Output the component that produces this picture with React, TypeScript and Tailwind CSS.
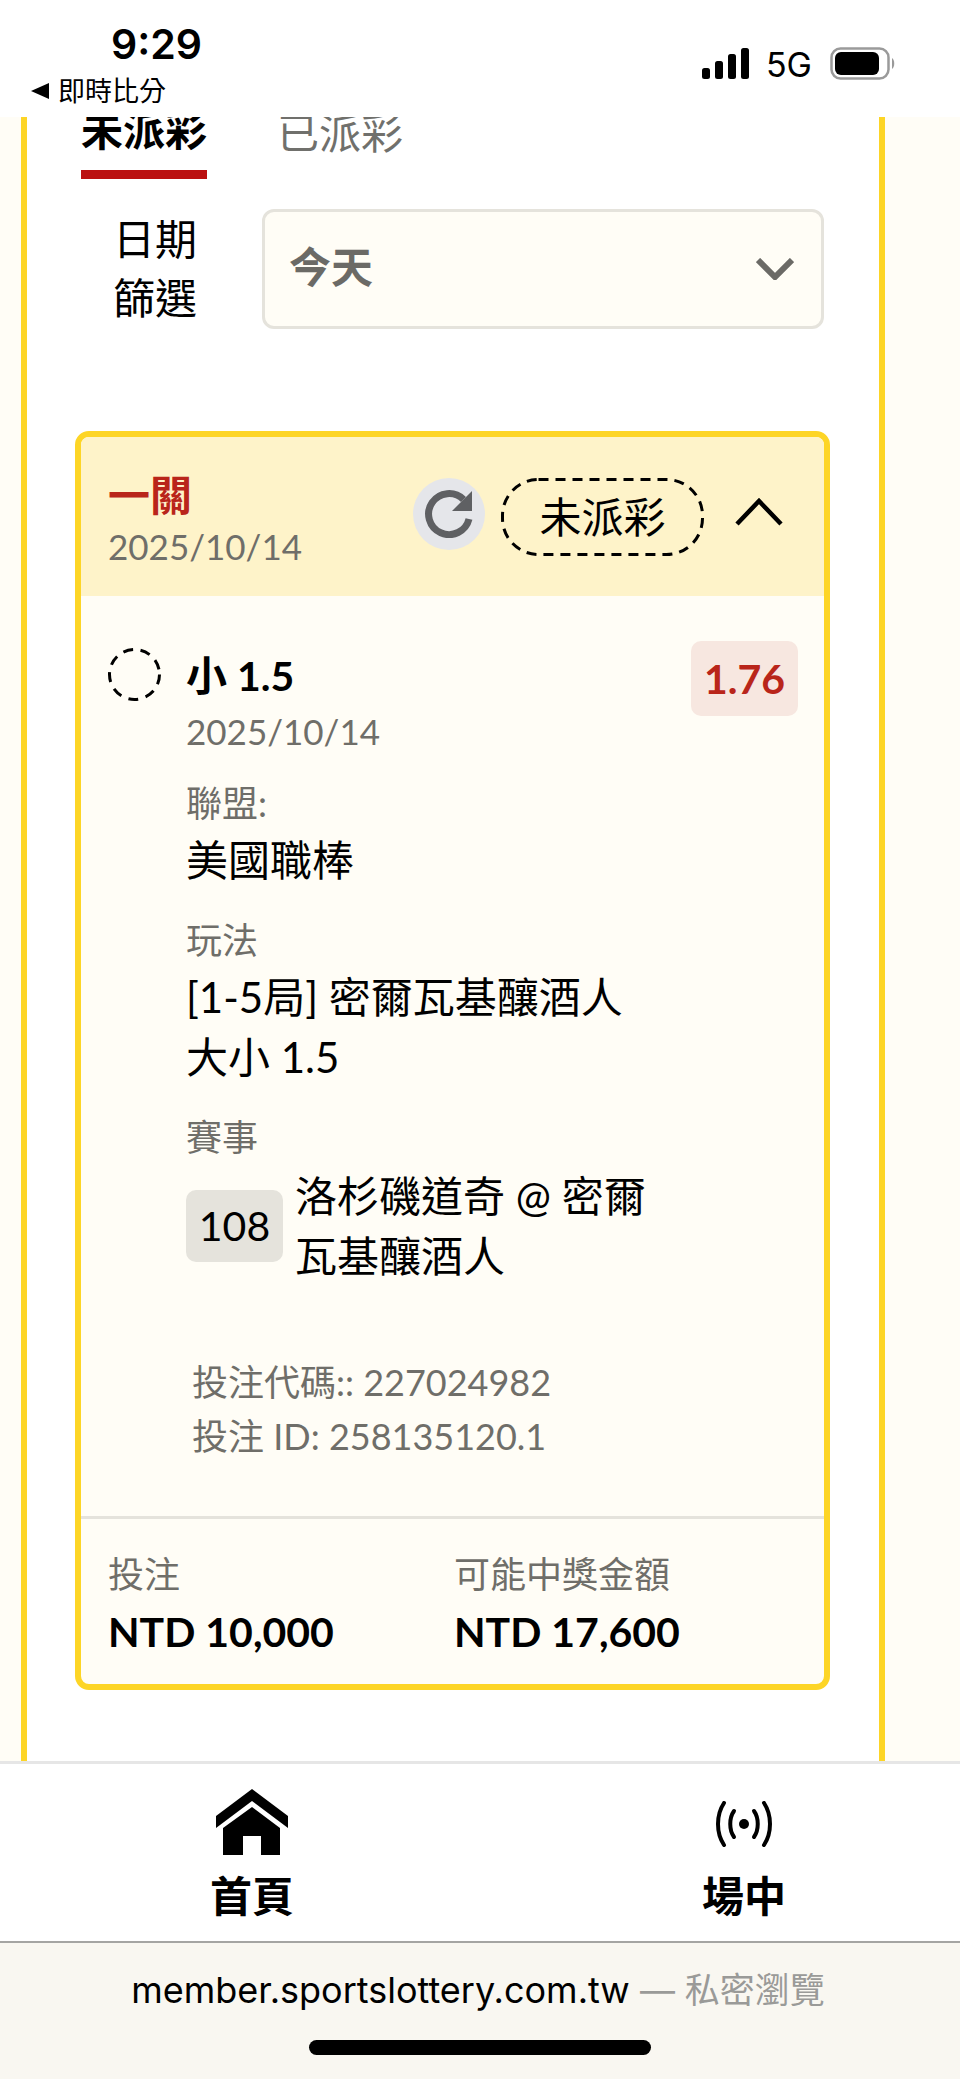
const LABEL = "text-[36px] leading-[50px] text-[#6f6e69]";
const DATE = "text-[35px] leading-[50px] text-[#6f6e69]";

function SignalIcon() {
  return (
    <svg width="47" height="31" viewBox="0 0 47 31" fill="#000">
      <rect x="0" y="20" width="8" height="11" rx="2.5" />
      <rect x="13" y="13" width="8" height="18" rx="2.5" />
      <rect x="26" y="6" width="8" height="25" rx="2.5" />
      <rect x="39" y="0" width="8" height="31" rx="2.5" />
    </svg>
  );
}

function BatteryIcon() {
  return (
    <svg width="66" height="33" viewBox="0 0 66 33">
      <rect x="1.5" y="1.5" width="57" height="30" rx="9" fill="none" stroke="#9a9a9a" strokeWidth="2.5" />
      <rect x="5" y="5" width="44" height="23" rx="6" fill="#000" />
      <path d="M62 11 C65 13 65 20 62 22 Z" fill="#9a9a9a" />
    </svg>
  );
}

function HomeIcon() {
  return (
    <svg width="74" height="66" viewBox="0 0 74 66" fill="#000">
      <path d="M37 0 L73 27 L73 39 L37 12 L1 39 L1 27 Z" />
      <path fillRule="evenodd" d="M37 18 L65 39 L65 66 L8 66 L8 39 Z M28 47 L28 66 L46 66 L46 47 Z" />
    </svg>
  );
}

function LiveIcon() {
  return (
    <svg width="56" height="46" viewBox="0 0 56 46" fill="none" stroke="#000" strokeWidth="4" strokeLinecap="round">
      <path d="M8 2 C0 14 0 32 8 44" />
      <path d="M48 2 C56 14 56 32 48 44" />
      <path d="M18 10 C13 17 13 29 18 36" />
      <path d="M38 10 C43 17 43 29 38 36" />
      <circle cx="28" cy="23" r="5" fill="#000" stroke="none" />
    </svg>
  );
}

function RefreshIcon() {
  return (
    <svg width="48" height="48" viewBox="0 0 48 48" fill="none">
      <path d="M38.5 9.5 A20.5 20.5 0 1 0 44 29" stroke="#5f6063" strokeWidth="7" />
      <path d="M47 1 L47 21 L27 21 Z" fill="#5f6063" />
    </svg>
  );
}

function PendingPill() {
  return (
    <div className="relative mt-[41px] ml-[16px] w-[203px] h-[78px] flex items-center justify-center text-[42px]">
      <svg className="absolute inset-0" width="203" height="78" viewBox="0 0 203 78" fill="none">
        <rect x="1.5" y="1.5" width="200" height="75" rx="36" stroke="#000" strokeWidth="3" strokeDasharray="10 7" />
      </svg>
      未派彩
    </div>
  );
}

export default function App() {
  return (
    <div className="w-[960px] h-[2079px] flex flex-col overflow-hidden bg-white text-black font-[Lato,'Noto_Sans_CJK_TC',sans-serif]">
      {/* status bar */}
      <header className="h-[117px] shrink-0 flex justify-between bg-white">
        <div className="pl-[31px] pt-[18px]">
          <div className="pl-[80px] text-[41px] leading-[52px] font-semibold font-[Inter,sans-serif]">9:29</div>
          <div className="mt-[4px] flex items-center gap-[9px]">
            <span className="w-0 h-0 border-y-[8px] border-y-transparent border-r-[18px] border-r-black" />
            <span className="text-[27px] leading-[34px]">即時比分</span>
          </div>
        </div>
        <div className="pr-[64px] pt-[47px] flex items-start">
          <div className="mt-[1px]">
            <SignalIcon />
          </div>
          <span className="ml-[17px] text-[34px] leading-[36px] font-[Inter,sans-serif]">5G</span>
          <div className="ml-[18px]">
            <BatteryIcon />
          </div>
        </div>
      </header>

      {/* scrolled page */}
      <main className="flex-1 min-h-0 overflow-hidden bg-[#fffdf6] pl-[21px] pr-[75px]">
        <div className="flow-root h-full bg-white border-x-[6px] border-[#fdd526]">
          <div className="-mt-[17px]">
            <div className="flex gap-[70px] pl-[54px]">
              <div className="w-[126px] pb-[10px] border-b-[9px] border-[#bb1010] text-[42px] leading-[60px] font-bold text-center">未派彩</div>
              <div className="pt-[3px] text-[42px] leading-[60px] text-[#70706c]">已派彩</div>
            </div>

            <div className="mt-[30px] flex items-center pl-[86px]">
              <div className="w-[84px] text-[42px] leading-[59px] text-center">
                日期
                <br />
                篩選
              </div>
              <div className="ml-[65px] w-[562px] h-[120px] flex items-center justify-between rounded-[12px] border-[3px] border-[#e5e3dc] bg-[#fffdf6] pl-[24px] pr-[27px]">
                <span className="pb-[4px] text-[42px] font-bold text-[#6b6a66]">今天</span>
                <svg width="38" height="22" viewBox="0 0 38 22" fill="none" stroke="#6b6a66" strokeWidth="6">
                  <path d="M2 2 L19 19 L36 2" />
                </svg>
              </div>
            </div>

            {/* bet card */}
            <section className="ml-[48px] mt-[102px] w-[755px] overflow-hidden rounded-[14px] border-[6px] border-[#fdd526] bg-[#fffdf6]">
              <div className="h-[159px] flex items-start bg-[#fef3c9] pl-[27px] pr-[41px]">
                <div className="pt-[28px] flex-1">
                  <div className="text-[42px] leading-[60px] font-bold text-[#b9251a]">一關</div>
                  <div className={`-mt-[4px] ${DATE}`}>2025/10/14</div>
                </div>
                <div className="mt-[41px] w-[72px] h-[72px] flex items-center justify-center rounded-full bg-[#e5e6ea]">
                  <RefreshIcon />
                </div>
                <PendingPill />
                <svg className="mt-[61px] ml-[31px]" width="48" height="28" viewBox="0 0 48 28" fill="none" stroke="#000" strokeWidth="4.5">
                  <path d="M2 26 L24 3 L46 26" />
                </svg>
              </div>

              <div className="flex pt-[45px] pl-[27px] pr-[26px]">
                <svg className="mt-[7px] shrink-0" width="53" height="53" viewBox="0 0 53 53" fill="none">
                  <circle cx="26.5" cy="26.5" r="25" stroke="#000" strokeWidth="3" strokeDasharray="10 7.6" />
                </svg>
                <div className="ml-[25px] flex-1 pt-[5px]">
                  <div className="text-[41px] leading-[60px] font-bold">小 1.5</div>
                  <div className={DATE}>2025/10/14</div>
                  <div className={`mt-[22px] ${LABEL}`}>聯盟:</div>
                  <div className="mt-[2px] text-[42px] leading-[60px]">美國職棒</div>
                  <div className={`mt-[25px] ${LABEL}`}>玩法</div>
                  <div className="mt-[2px] max-w-[440px] text-[42px] leading-[60px]">[1-5局] 密爾瓦基釀酒人 大小 1.5</div>
                  <div className={`mt-[25px] ${LABEL}`}>賽事</div>
                  <div className="mt-[4px] flex items-center gap-[12px]">
                    <div className="w-[97px] h-[72px] flex items-center justify-center rounded-[10px] bg-[#e5e3dc] text-[41px]">108</div>
                    <div className="w-[375px] text-[42px] leading-[60px]">洛杉磯道奇 @ 密爾瓦基釀酒人</div>
                  </div>
                </div>
                <div className="w-[107px] h-[75px] shrink-0 flex items-center justify-center rounded-[10px] bg-[#f7e7e0] text-[41px] font-bold text-[#b9251a]">1.76</div>
              </div>

              <div className="mt-[69px] pl-[111px] pb-[53px] text-[36px] leading-[54px] text-[#6f6e69]">
                <div>投注代碼:: 227024982</div>
                <div>投注 ID: 258135120.1</div>
              </div>

              <div className="flex border-t-[3px] border-[#e5e3dc] pt-[30px] pb-[22px] pl-[27px]">
                <div className="w-[346px]">
                  <div className={LABEL}>投注</div>
                  <div className="mt-[3px] text-[41px] leading-[60px] font-bold">NTD 10,000</div>
                </div>
                <div>
                  <div className={LABEL}>可能中獎金額</div>
                  <div className="mt-[3px] text-[41px] leading-[60px] font-bold">NTD 17,600</div>
                </div>
              </div>
            </section>
          </div>
        </div>
      </main>

      {/* bottom nav */}
      <nav className="h-[180px] shrink-0 flex justify-between bg-white border-t-[3px] border-[#e6e6e6] pl-[192px] pr-[156px] pt-[25px]">
        <div className="w-[120px] flex flex-col items-center">
          <HomeIcon />
          <span className="mt-[16px] text-[42px] leading-[50px] font-bold">首頁</span>
        </div>
        <div className="w-[120px] flex flex-col items-center">
          <div className="h-[66px] pt-[12px]">
            <LiveIcon />
          </div>
          <span className="mt-[16px] text-[42px] leading-[50px] font-bold">場中</span>
        </div>
      </nav>

      {/* safari bar */}
      <footer className="h-[138px] shrink-0 flex flex-col items-center bg-[#f9f7f1] border-t-[2px] border-[#a5a5a3]">
        <div className="mt-[24px] pr-[4px] text-[36px] leading-[46px] font-[Inter,'Noto_Sans_CJK_TC',sans-serif]">
          member.sportslottery.com.tw <span className="text-[35px] text-[#9a9a98]">— 私密瀏覽</span>
        </div>
        <div className="mt-[27px] w-[342px] h-[15px] rounded-full bg-black" />
      </footer>
    </div>
  );
}
